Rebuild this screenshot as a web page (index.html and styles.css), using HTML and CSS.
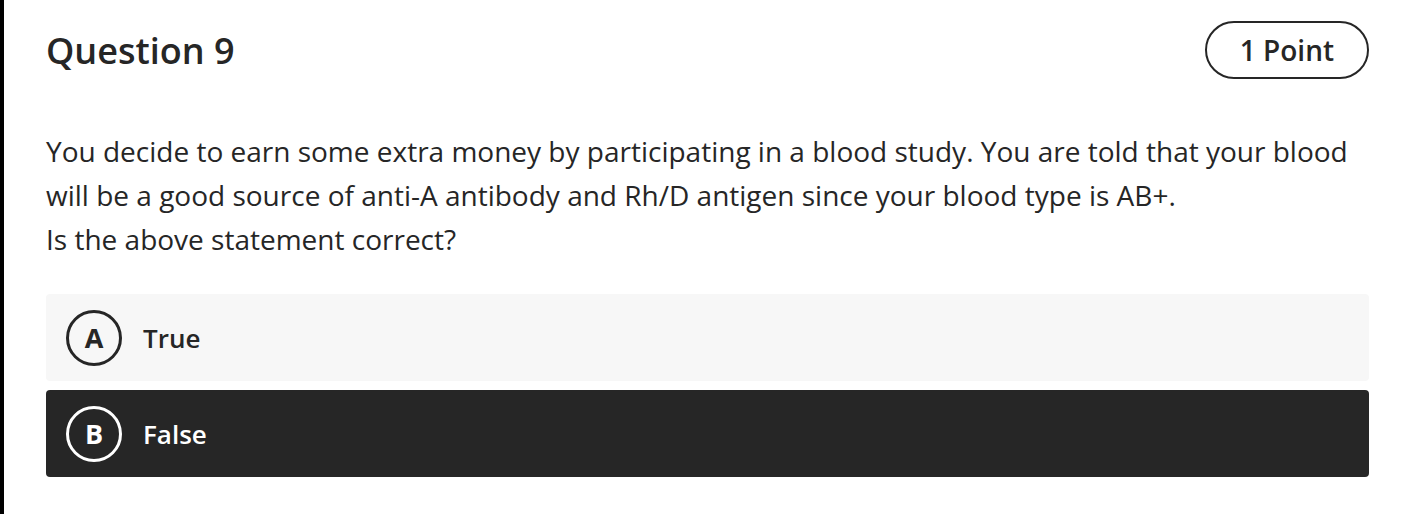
FILE: index.html
```html
<!DOCTYPE html>
<html lang="en">
<head>
<meta charset="utf-8">
<title>Question 9</title>
<link rel="stylesheet" href="styles.css">
</head>
<body>
<div id="question">
 <div class="qhead">
  <h2>Question 9</h2>
  <span class="points">1 Point</span>
 </div>
 <p class="prompt">You decide to earn some extra money by participating in a blood study. You are told that your blood will be a good source of anti-A antibody and Rh/D antigen since your blood type is AB+.<br />Is the above statement correct?</p>
 <ul class="answers">
  <li class="answer"><span class="letter">A</span>True</li>
  <li class="answer selected"><span class="letter">B</span>False</li>
 </ul>
</div>
</body>
</html>
```

FILE: styles.css
```css
body{margin:0px;padding:0px;background-color:#ffffff;font-family:"Open Sans",Arial,sans-serif;color:#262626;}
#question{border-left:4px solid #000000;padding:21px 55px 36px 42px;min-height:457px;}
.qhead{display:flex;justify-content:space-between;align-items:center;}
.qhead h2{margin:0px;font-size:36px;font-weight:600;}
.points{display:inline-block;border:2px solid #262626;border-radius:30px;padding:0px 33px;height:54px;line-height:54px;font-size:28px;font-weight:600;}
.prompt{margin:50px 0px 33px 0px;font-size:28px;line-height:44px;}
.answers{list-style:none;margin:0px;padding:0px;display:flex;flex-direction:column;gap:9px;}
.answer{display:flex;align-items:center;height:87px;padding-left:20px;background-color:#f7f7f7;border-radius:4px;font-size:26px;font-weight:600;}
.letter{box-sizing:border-box;width:56px;height:56px;border:3px solid #262626;border-radius:50%;display:flex;align-items:center;justify-content:center;margin-right:21px;font-size:27px;font-weight:700;}
.selected{background-color:#262626;color:#ffffff;}
.selected .letter{border-color:#ffffff;}
```
